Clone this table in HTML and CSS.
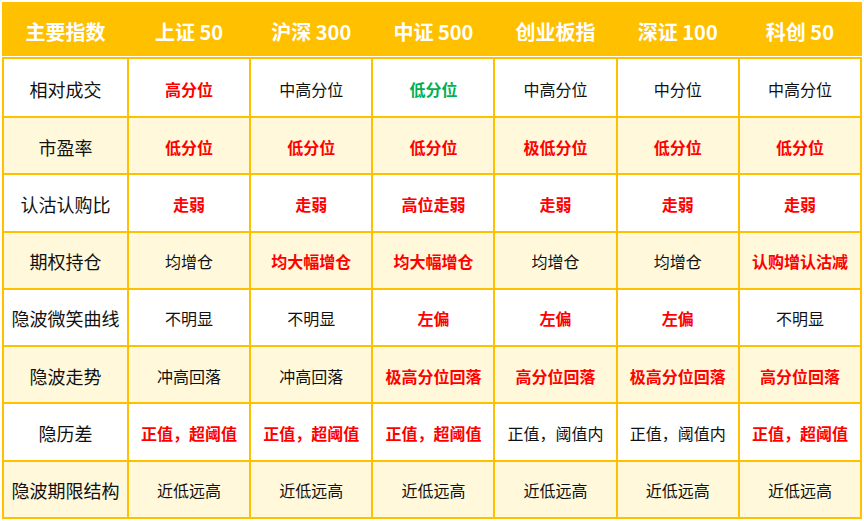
FILE: index.html
```html
<!DOCTYPE html>
<html lang="zh-CN">
<head>
<meta charset="utf-8">
<link rel="stylesheet" href="styles.css">
</head>
<body>
<div class="sheet">
  <div class="head">
    <div class="hc">主要指数</div>
    <div class="hc">上证 50</div>
    <div class="hc">沪深 300</div>
    <div class="hc">中证 500</div>
    <div class="hc">创业板指</div>
    <div class="hc">深证 100</div>
    <div class="hc">科创 50</div>
  </div>
  <div class="body">
    <div class="c lab">相对成交</div>
    <div class="c red">高分位</div>
    <div class="c">中高分位</div>
    <div class="c green">低分位</div>
    <div class="c">中高分位</div>
    <div class="c">中分位</div>
    <div class="c">中高分位</div>

    <div class="c lab alt">市盈率</div>
    <div class="c alt red">低分位</div>
    <div class="c alt red">低分位</div>
    <div class="c alt red">低分位</div>
    <div class="c alt red">极低分位</div>
    <div class="c alt red">低分位</div>
    <div class="c alt red">低分位</div>

    <div class="c lab">认沽认购比</div>
    <div class="c red">走弱</div>
    <div class="c red">走弱</div>
    <div class="c red">高位走弱</div>
    <div class="c red">走弱</div>
    <div class="c red">走弱</div>
    <div class="c red">走弱</div>

    <div class="c lab alt">期权持仓</div>
    <div class="c alt">均增仓</div>
    <div class="c alt red">均大幅增仓</div>
    <div class="c alt red">均大幅增仓</div>
    <div class="c alt">均增仓</div>
    <div class="c alt">均增仓</div>
    <div class="c alt red">认购增认沽减</div>

    <div class="c lab">隐波微笑曲线</div>
    <div class="c">不明显</div>
    <div class="c">不明显</div>
    <div class="c red">左偏</div>
    <div class="c red">左偏</div>
    <div class="c red">左偏</div>
    <div class="c">不明显</div>

    <div class="c lab alt">隐波走势</div>
    <div class="c alt">冲高回落</div>
    <div class="c alt">冲高回落</div>
    <div class="c alt red">极高分位回落</div>
    <div class="c alt red">高分位回落</div>
    <div class="c alt red">极高分位回落</div>
    <div class="c alt red">高分位回落</div>

    <div class="c lab">隐历差</div>
    <div class="c red">正值，超阈值</div>
    <div class="c red">正值，超阈值</div>
    <div class="c red">正值，超阈值</div>
    <div class="c">正值，阈值内</div>
    <div class="c">正值，阈值内</div>
    <div class="c red">正值，超阈值</div>

    <div class="c lab alt">隐波期限结构</div>
    <div class="c alt">近低远高</div>
    <div class="c alt">近低远高</div>
    <div class="c alt">近低远高</div>
    <div class="c alt">近低远高</div>
    <div class="c alt">近低远高</div>
    <div class="c alt">近低远高</div>
  </div>
</div>
</body>
</html>
```

FILE: styles.css
```css
html, body {
  margin: 0;
  padding: 0;
  background: #ffffff;
}

body {
  font-family: "Noto Sans CJK SC", "Noto Sans", sans-serif;
  color: #111;
}

.sheet {
  width: 860px;
  margin: 2px 0 0 2px;
}

.head {
  display: grid;
  grid-template-columns: 123px repeat(6, 1fr);
  column-gap: 2px;
  padding: 0 2px;
  height: 54px;
  background: #ffc000;
}

.hc {
  display: flex;
  align-items: center;
  justify-content: center;
  padding-top: 4px;
  color: #ffffff;
  font-size: 20px;
  font-weight: 700;
}

.body {
  margin-top: 1px;
  display: grid;
  grid-template-columns: 123px repeat(6, 1fr);
  grid-template-rows: 57px repeat(7, 1fr);
  gap: 2px;
  padding: 2px;
  height: 462px;
  box-sizing: border-box;
  background: #ffc000;
}

.c {
  display: flex;
  align-items: center;
  justify-content: center;
  padding-top: 2px;
  background: #ffffff;
  font-size: 16px;
  white-space: nowrap;
}

.c.alt {
  background: #fff8db;
}

.c.lab {
  font-size: 18px;
}

.red {
  color: #ff0000;
  font-weight: 700;
}

.green {
  color: #00b050;
  font-weight: 700;
}
```
